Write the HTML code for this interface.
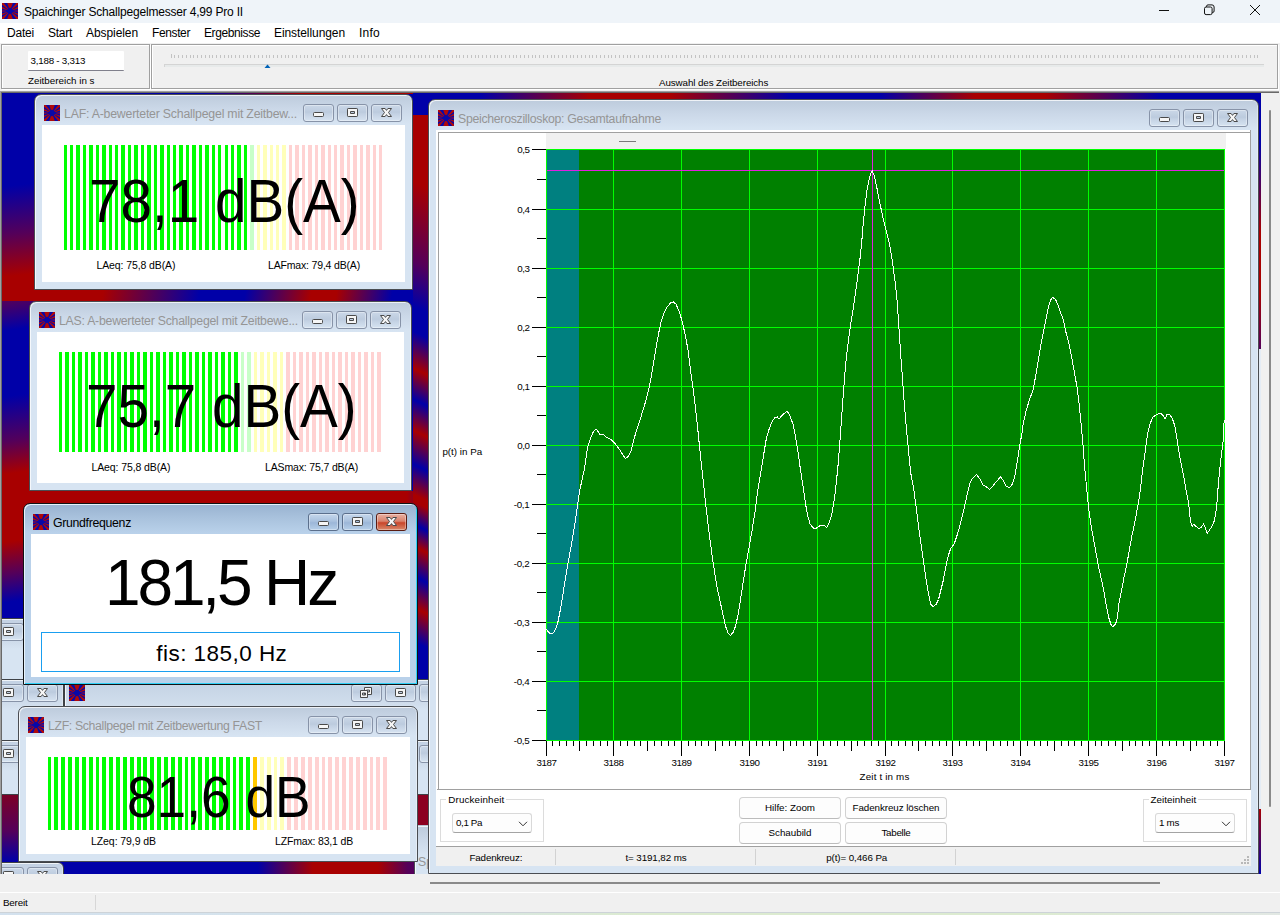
<!DOCTYPE html>
<html lang="de"><head><meta charset="utf-8"><title>Spaichinger Schallpegelmesser 4,99 Pro II</title>
<style>
html,body{margin:0;padding:0;background:#f0f0f0;}
body{width:1280px;height:915px;position:relative;overflow:hidden;font-family:"Liberation Sans",sans-serif;}
.t{position:absolute;white-space:pre;display:block;}
.r{position:absolute;}
.ic{position:absolute;display:block;}
#mdi{position:absolute;left:2px;top:93px;width:1259px;height:781px;overflow:hidden;background:#0000a8;}
.win{position:absolute;box-sizing:border-box;border:1px solid #4a4d52;border-radius:7px 7px 0 0;background:linear-gradient(#bdcbdc 0,#cbd8e8 14px,#d7e4f2 29px,#d7e4f2 100%);box-shadow:inset 1px 1px 0 rgba(255,255,255,.75),inset -1px 0 0 rgba(255,255,255,.35);}
.win.act{border-color:#101214;box-shadow:inset 1px 1px 0 #e6f3fc,inset -1px -1px 0 #2fd0f6;background:linear-gradient(#98b2d0 0,#a9c2dd 14px,#b9d1ea 29px,#b9d1ea 100%);}
.win.mini{border-radius:6px 6px 0 0;border-color:#3e4146;background:linear-gradient(#c3d1e3 0,#d0ddec 24px,#d7e4f2 30px,#d7e4f2 100%);}
.cli{position:absolute;background:#fff;overflow:hidden;}
.wb{position:absolute;width:31px;height:18px;box-sizing:border-box;border:1px solid #8793a8;border-radius:3px;background:linear-gradient(#cbd8e8 0,#bccbde 45%,#c3d1e3 55%,#d6e3f1 100%);box-shadow:inset 0 0 0 1px rgba(255,255,255,.35);}
.cb{position:absolute;box-sizing:border-box;border:1px solid #d9d9d9;border-bottom-color:#a4a4a4;border-radius:3px;background:#fdfdfd;}
.pb{position:absolute;box-sizing:border-box;border:1px solid #d2d2d2;border-bottom-color:#bcbcbc;border-radius:4px;background:#fdfdfd;}
.wb svg{position:absolute;left:-1px;top:-1px}
.win.act .wb{border-color:#5b6f8c;background:linear-gradient(#c5d7ec 0,#a9c1de 45%,#9cb7d8 55%,#b6cfe9 100%);}
.win.act .wb.cl{border-color:#5a1c12;background:linear-gradient(#e9b1a3 0,#d9826c 45%,#c8452a 55%,#d9896a 100%);}
</style></head><body>
<div class="r" style="left:0px;top:0px;width:1280px;height:23px;background:#eff4f9;"></div>
<svg class="ic" viewBox="0 0 16 16" width="16" height="16" style="left:2px;top:3px"><rect width="16" height="16" fill="#0808a8"/><path fill="#b00a0a" d="M8.0 8.0L1.5 -10.9L14.5 -10.9zM8.0 8.0L14.5 26.9L1.5 26.9zM8.0 8.0L20.3 -7.8L23.8 -4.3zM8.0 8.0L-7.8 -4.3L-4.3 -7.8zM8.0 8.0L-4.3 23.8L-7.8 20.3zM8.0 8.0L23.8 20.3L20.3 23.8zM8.0 8.0L25.7 -1.2L27.2 2.3zM8.0 8.0L-11.2 2.3L-9.7 -1.2zM8.0 8.0L-9.7 17.2L-11.2 13.7zM8.0 8.0L27.2 13.7L25.7 17.2z"/><path fill="#8a0a3c" d="M8.0 8.0L27.9 5.9L27.9 10.1zM8.0 8.0L-11.9 10.1L-11.9 5.9z"/><path d="M8 4.6L12.6 8 8 11.4 3.4 8z" fill="#0808a8"/></svg>
<span class="t" style="left:24.00px;top:5.64px;font-size:12px;line-height:13.40px;color:#000;letter-spacing:-0.190px;">Spaichinger Schallpegelmesser 4,99 Pro II</span>
<svg class="ic" style="left:1150px;top:0" width="130" height="23" viewBox="0 0 130 23" fill="none" stroke="#111" stroke-width="1"><path d="M9 10.5h10"/><rect x="54.5" y="7" width="7.6" height="7.6" rx="1.6"/><path d="M56.5 7v-.6a1.5 1.5 0 0 1 1.5-1.5h4a2.1 2.1 0 0 1 2.1 2.1v4a1.5 1.5 0 0 1-1.5 1.5h-.5"/><path d="M100 5l10 10M110 5l-10 10"/></svg>
<div class="r" style="left:0px;top:23px;width:1280px;height:20px;background:#ffffff;"></div>
<span class="t" style="left:7.00px;top:27.14px;font-size:12px;line-height:13.40px;color:#000;letter-spacing:-0.203px;">Datei</span>
<span class="t" style="left:48.00px;top:27.14px;font-size:12px;line-height:13.40px;color:#000;letter-spacing:-0.268px;">Start</span>
<span class="t" style="left:86.00px;top:27.14px;font-size:12px;line-height:13.40px;color:#000;letter-spacing:-0.078px;">Abspielen</span>
<span class="t" style="left:152.00px;top:27.14px;font-size:12px;line-height:13.40px;color:#000;letter-spacing:-0.383px;">Fenster</span>
<span class="t" style="left:204.00px;top:27.14px;font-size:12px;line-height:13.40px;color:#000;letter-spacing:-0.404px;">Ergebnisse</span>
<span class="t" style="left:274.00px;top:27.14px;font-size:12px;line-height:13.40px;color:#000;letter-spacing:-0.081px;">Einstellungen</span>
<span class="t" style="left:359.00px;top:27.14px;font-size:12px;line-height:13.40px;color:#000;letter-spacing:0.246px;">Info</span>
<div class="r" style="left:0px;top:43px;width:1280px;height:48px;background:#f0f0f0;"></div>
<div class="r" style="left:2px;top:45px;width:149px;height:45px;background:transparent;border:1px solid #fff;box-sizing:border-box"></div>
<div class="r" style="left:1px;top:44px;width:149px;height:45px;background:transparent;border:1px solid #a0a0a0;box-sizing:border-box"></div>
<div class="r" style="left:152px;top:45px;width:1127px;height:45px;background:transparent;border:1px solid #fff;box-sizing:border-box"></div>
<div class="r" style="left:151px;top:44px;width:1127px;height:45px;background:transparent;border:1px solid #a0a0a0;box-sizing:border-box"></div>
<div class="r" style="left:28px;top:51px;width:96px;height:20px;background:#fff;border-bottom:1px solid #80808c;box-sizing:border-box;border-radius:1px"></div>
<span class="t" style="left:30.60px;top:55.63px;font-size:9.8px;line-height:10.95px;color:#000;letter-spacing:-0.243px;">3,188 - 3,313</span>
<span class="t" style="left:28.00px;top:75.53px;font-size:9.8px;line-height:10.95px;color:#000;letter-spacing:0.003px;">Zeitbereich in s</span>
<span class="t" style="left:659.00px;top:77.63px;font-size:9.8px;line-height:10.95px;color:#000;letter-spacing:-0.099px;">Auswahl des Zeitbereichs</span>
<svg class="ic" style="left:0;top:50px" width="1280" height="20" viewBox="0 50 1280 20" shape-rendering="crispEdges"><path d="M171.5 54V58M174.5 55V58M178.5 55V58M182.5 55V58M186.5 55V58M190.5 55V58M193.5 55V58M197.5 55V58M201.5 55V58M205.5 55V58M209.5 55V58M212.5 55V58M216.5 55V58M220.5 55V58M224.5 55V58M228.5 55V58M231.5 55V58M235.5 55V58M239.5 55V58M243.5 55V58M247.5 55V58M250.5 55V58M254.5 55V58M258.5 55V58M262.5 55V58M266.5 55V58M269.5 55V58M273.5 55V58M277.5 55V58M281.5 55V58M285.5 55V58M288.5 55V58M292.5 55V58M296.5 55V58M300.5 55V58M304.5 55V58M307.5 55V58M311.5 55V58M315.5 55V58M319.5 55V58M323.5 55V58M326.5 55V58M330.5 55V58M334.5 55V58M338.5 55V58M342.5 55V58M345.5 55V58M349.5 55V58M353.5 55V58M357.5 55V58M361.5 55V58M364.5 55V58M368.5 55V58M372.5 55V58M376.5 55V58M380.5 55V58M383.5 55V58M387.5 55V58M391.5 55V58M395.5 55V58M399.5 55V58M402.5 55V58M406.5 55V58M410.5 55V58M414.5 55V58M418.5 55V58M421.5 55V58M425.5 55V58M429.5 55V58M433.5 55V58M437.5 55V58M440.5 55V58M444.5 55V58M448.5 55V58M452.5 55V58M456.5 55V58M459.5 55V58M463.5 55V58M467.5 55V58M471.5 55V58M475.5 55V58M478.5 55V58M482.5 55V58M486.5 55V58M490.5 55V58M494.5 55V58M497.5 55V58M501.5 55V58M505.5 55V58M509.5 55V58M513.5 55V58M516.5 55V58M520.5 55V58M524.5 55V58M528.5 55V58M532.5 55V58M535.5 55V58M539.5 55V58M543.5 55V58M547.5 55V58M551.5 55V58M554.5 55V58M558.5 55V58M562.5 55V58M566.5 55V58M570.5 55V58M573.5 55V58M577.5 55V58M581.5 55V58M585.5 55V58M589.5 55V58M592.5 55V58M596.5 55V58M600.5 55V58M604.5 55V58M608.5 55V58M611.5 55V58M615.5 55V58M619.5 55V58M623.5 55V58M627.5 55V58M630.5 55V58M634.5 55V58M638.5 55V58M642.5 55V58M646.5 55V58M649.5 55V58M653.5 55V58M657.5 55V58M661.5 55V58M665.5 55V58M668.5 55V58M672.5 55V58M676.5 55V58M680.5 55V58M684.5 55V58M687.5 55V58M691.5 55V58M695.5 55V58M699.5 55V58M703.5 55V58M706.5 55V58M710.5 55V58M714.5 55V58M718.5 55V58M722.5 55V58M725.5 55V58M729.5 55V58M733.5 55V58M737.5 55V58M741.5 55V58M744.5 55V58M748.5 55V58M752.5 55V58M756.5 55V58M760.5 55V58M763.5 55V58M767.5 55V58M771.5 55V58M775.5 55V58M779.5 55V58M782.5 55V58M786.5 55V58M790.5 55V58M794.5 55V58M798.5 55V58M801.5 55V58M805.5 55V58M809.5 55V58M813.5 55V58M817.5 55V58M820.5 55V58M824.5 55V58M828.5 55V58M832.5 55V58M836.5 55V58M839.5 55V58M843.5 55V58M847.5 55V58M851.5 55V58M855.5 55V58M858.5 55V58M862.5 55V58M866.5 55V58M870.5 55V58M874.5 55V58M877.5 55V58M881.5 55V58M885.5 55V58M889.5 55V58M893.5 55V58M896.5 55V58M900.5 55V58M904.5 55V58M908.5 55V58M912.5 55V58M915.5 55V58M919.5 55V58M923.5 55V58M927.5 55V58M931.5 55V58M934.5 55V58M938.5 55V58M942.5 55V58M946.5 55V58M950.5 55V58M953.5 55V58M957.5 55V58M961.5 55V58M965.5 55V58M969.5 55V58M972.5 55V58M976.5 55V58M980.5 55V58M984.5 55V58M988.5 55V58M991.5 55V58M995.5 55V58M999.5 55V58M1003.5 55V58M1007.5 55V58M1010.5 55V58M1014.5 55V58M1018.5 55V58M1022.5 55V58M1026.5 55V58M1029.5 55V58M1033.5 55V58M1037.5 55V58M1041.5 55V58M1045.5 55V58M1048.5 55V58M1052.5 55V58M1056.5 55V58M1060.5 55V58M1064.5 55V58M1067.5 55V58M1071.5 55V58M1075.5 55V58M1079.5 55V58M1083.5 55V58M1086.5 55V58M1090.5 55V58M1094.5 55V58M1098.5 55V58M1102.5 55V58M1105.5 55V58M1109.5 55V58M1113.5 55V58M1117.5 55V58M1121.5 55V58M1124.5 55V58M1128.5 55V58M1132.5 55V58M1136.5 55V58M1140.5 55V58M1143.5 55V58M1147.5 55V58M1151.5 55V58M1155.5 55V58M1159.5 55V58M1162.5 55V58M1166.5 55V58M1170.5 55V58M1174.5 55V58M1178.5 55V58M1181.5 55V58M1185.5 55V58M1189.5 55V58M1193.5 55V58M1197.5 55V58M1200.5 55V58M1204.5 55V58M1208.5 55V58M1212.5 55V58M1216.5 55V58M1219.5 55V58M1223.5 55V58M1227.5 55V58M1231.5 55V58M1235.5 55V58M1238.5 55V58M1242.5 55V58M1246.5 55V58M1250.5 55V58M1254.5 55V58M1257.5 55V58" stroke="#c3c3c3" stroke-width="1" fill="none"/><rect x="164" y="64" width="1100" height="3" fill="#e7eaea"/><path d="M164 64.5H1264M164.5 64V67" stroke="#d4d4d4" stroke-width="1" fill="none"/></svg>
<svg class="ic" style="left:264px;top:64px" width="7" height="4" viewBox="0 0 7 4"><path d="M.5 4L3.5 .6L6.5 4z" fill="#0063b8"/></svg>
<div id="mdi">
<div class="r" style="left:0px;top:0px;width:1259px;height:781px;background:#0000a8"></div>
<div class="r" style="left:411px;top:0px;width:848px;height:15px;background:linear-gradient(90deg,#0000a8 0px,#0000a8 67px,#a80000 177px,#a80000 257px,#0000a8 377px,#0000a8 467px,#a80000 562px,#a80000 632px,#0000a8 747px,#0000a8 848px)"></div>
<div class="r" style="left:0px;top:0px;width:411px;height:1px;background:linear-gradient(90deg,#0000a8 0px,#0000a8 200px,#a80000 300px,#a80000 411px)"></div>
<div class="r" style="left:0px;top:1px;width:41px;height:207px;background:linear-gradient(174deg,#0000a8 0px,#0000a8 92px,#54005a 140px,#a80000 182px,#a80000 207px)"></div>
<div class="r" style="left:0px;top:197px;width:426px;height:19px;background:linear-gradient(100deg,#a80000 0px,#a80000 100px,#0000a8 195px,#0000a8 240px,#a80000 305px,#a80000 330px,#0000a8 385px,#0000a8 426px)"></div>
<div class="r" style="left:0px;top:208px;width:36px;height:203px;background:linear-gradient(172deg,#54005a 0px,#0000a8 30px,#0000a8 95px,#54005a 140px,#a80000 172px,#a80000 203px)"></div>
<div class="r" style="left:0px;top:398px;width:426px;height:20px;background:linear-gradient(90deg,#a80000 0px,#a80000 405px,#54005a 426px)"></div>
<div class="r" style="left:0px;top:411px;width:30px;height:114px;background:linear-gradient(172deg,#a80000 0px,#a80000 38px,#54005a 70px,#0000a8 98px,#0000a8 114px)"></div>
<div class="r" style="left:411px;top:22px;width:16px;height:565px;background:linear-gradient(205deg,#a80000 3.3px,#a80000 66.7px,#54005a 139.2px,#0000a8 180.0px,#0000a8 202.7px,#a80000 236.2px,#0000a8 264.3px,#a80000 292.4px,#0000a8 323.2px,#a80000 350.4px,#a80000 356.8px,#0000a8 377.6px,#a80000 397.5px,#0000a8 424.7px,#a80000 452.8px,#0000a8 483.6px,#0000a8 515.4px)"></div>
<div class="r" style="left:411px;top:7px;width:16px;height:15px;background:#0000a8"></div>
<div class="r" style="left:0px;top:698px;width:17px;height:71px;background:linear-gradient(180deg,#800020 0px,#54005a 40px,#0000a8 71px)"></div>
<div class="r" style="left:61px;top:768px;width:366px;height:13px;background:linear-gradient(90deg,#0000a8 0px,#0000a8 195px,#a80000 250px,#a80000 315px,#54005a 345px,#54005a 366px)"></div>
<div class="r" style="left:416px;top:702px;width:11px;height:30px;background:#8c0020"></div>
<div class="r" style="left:1257px;top:0px;width:2px;height:256px;background:linear-gradient(180deg,#0000a8 0px,#0000a8 50px,#a80000 140px,#a80000 200px,#54005a 256px)"></div>
<div class="r" style="left:1257px;top:256px;width:2px;height:460px;background:#e4ecf5"></div>
<div class="r" style="left:1257px;top:716px;width:2px;height:65px;background:linear-gradient(180deg,#a80000 0px,#54005a 30px,#0000a8 65px)"></div>
<div class="win mini" style="left:-333px;top:525px;width:395px;height:62px"><div class="wb " style="left:289px;top:4px"><svg width="31" height="18" viewBox="0 0 31 18" fill="#f6f6f6" stroke="#4a4a4a" stroke-width="1" stroke-linejoin="round"><rect x="10.5" y="8.5" width="10" height="4" rx="1" /></svg></div><div class="wb " style="left:323px;top:4px"><svg width="31" height="18" viewBox="0 0 31 18" fill="#f6f6f6" stroke="#4a4a4a" stroke-width="1" stroke-linejoin="round"><path fill-rule="evenodd" d="M11.2 4.5h8.6a.7.7 0 0 1 .7.7v6.6a.7.7 0 0 1-.7.7h-8.6a.7.7 0 0 1-.7-.7v-6.6a.7.7 0 0 1 .7-.7zM13.5 7.5v2h4v-2z"/></svg></div><div class="wb " style="left:357px;top:4px"><svg width="31" height="18" viewBox="0 0 31 18" fill="#f6f6f6" stroke="#4a4a4a" stroke-width="1" stroke-linejoin="round"><path d="M10.5 4.5h3.6l1.4 1.9 1.4-1.9h3.6l-3 4 3 4h-3.6l-1.4-1.9-1.4 1.9h-3.6l3-4z"/></svg></div></div>
<div class="win mini" style="left:-333px;top:586px;width:395px;height:62px"><div class="wb " style="left:289px;top:4px"><svg width="31" height="18" viewBox="0 0 31 18" fill="#f6f6f6" stroke="#4a4a4a" stroke-width="1" stroke-linejoin="round"><rect x="10.5" y="8.5" width="10" height="4" rx="1" /></svg></div><div class="wb " style="left:323px;top:4px"><svg width="31" height="18" viewBox="0 0 31 18" fill="#f6f6f6" stroke="#4a4a4a" stroke-width="1" stroke-linejoin="round"><path fill-rule="evenodd" d="M11.2 4.5h8.6a.7.7 0 0 1 .7.7v6.6a.7.7 0 0 1-.7.7h-8.6a.7.7 0 0 1-.7-.7v-6.6a.7.7 0 0 1 .7-.7zM13.5 7.5v2h4v-2z"/></svg></div><div class="wb " style="left:357px;top:4px"><svg width="31" height="18" viewBox="0 0 31 18" fill="#f6f6f6" stroke="#4a4a4a" stroke-width="1" stroke-linejoin="round"><path d="M10.5 4.5h3.6l1.4 1.9 1.4-1.9h3.6l-3 4 3 4h-3.6l-1.4-1.9-1.4 1.9h-3.6l3-4z"/></svg></div></div>
<div class="win mini" style="left:62px;top:586px;width:392px;height:62px"><svg class="ic" viewBox="0 0 16 16" width="16" height="16" style="left:4px;top:5px"><rect width="16" height="16" fill="#0808a8"/><path fill="#b00a0a" d="M8.0 8.0L1.5 -10.9L14.5 -10.9zM8.0 8.0L14.5 26.9L1.5 26.9zM8.0 8.0L20.3 -7.8L23.8 -4.3zM8.0 8.0L-7.8 -4.3L-4.3 -7.8zM8.0 8.0L-4.3 23.8L-7.8 20.3zM8.0 8.0L23.8 20.3L20.3 23.8zM8.0 8.0L25.7 -1.2L27.2 2.3zM8.0 8.0L-11.2 2.3L-9.7 -1.2zM8.0 8.0L-9.7 17.2L-11.2 13.7zM8.0 8.0L27.2 13.7L25.7 17.2z"/><path fill="#8a0a3c" d="M8.0 8.0L27.9 5.9L27.9 10.1zM8.0 8.0L-11.9 10.1L-11.9 5.9z"/><path d="M8 4.6L12.6 8 8 11.4 3.4 8z" fill="#0808a8"/></svg><div class="wb " style="left:286px;top:4px"><svg width="31" height="18" viewBox="0 0 31 18" fill="#f6f6f6" stroke="#4a4a4a" stroke-width="1" stroke-linejoin="round"><path fill-rule="evenodd" d="M13.5 3.5h7v7h-7zM15.5 6v2h3v-2z"/><path fill-rule="evenodd" d="M9.5 6.5h7v7h-7zM11.5 9v2h3v-2z"/></svg></div><div class="wb " style="left:320px;top:4px"><svg width="31" height="18" viewBox="0 0 31 18" fill="#f6f6f6" stroke="#4a4a4a" stroke-width="1" stroke-linejoin="round"><path fill-rule="evenodd" d="M11.2 4.5h8.6a.7.7 0 0 1 .7.7v6.6a.7.7 0 0 1-.7.7h-8.6a.7.7 0 0 1-.7-.7v-6.6a.7.7 0 0 1 .7-.7zM13.5 7.5v2h4v-2z"/></svg></div><div class="wb " style="left:354px;top:4px"><svg width="31" height="18" viewBox="0 0 31 18" fill="#f6f6f6" stroke="#4a4a4a" stroke-width="1" stroke-linejoin="round"><path d="M10.5 4.5h3.6l1.4 1.9 1.4-1.9h3.6l-3 4 3 4h-3.6l-1.4-1.9-1.4 1.9h-3.6l3-4z"/></svg></div></div>
<div class="win mini" style="left:-333px;top:647px;width:395px;height:55px"><div class="wb " style="left:289px;top:4px"><svg width="31" height="18" viewBox="0 0 31 18" fill="#f6f6f6" stroke="#4a4a4a" stroke-width="1" stroke-linejoin="round"><rect x="10.5" y="8.5" width="10" height="4" rx="1" /></svg></div><div class="wb " style="left:323px;top:4px"><svg width="31" height="18" viewBox="0 0 31 18" fill="#f6f6f6" stroke="#4a4a4a" stroke-width="1" stroke-linejoin="round"><path fill-rule="evenodd" d="M11.2 4.5h8.6a.7.7 0 0 1 .7.7v6.6a.7.7 0 0 1-.7.7h-8.6a.7.7 0 0 1-.7-.7v-6.6a.7.7 0 0 1 .7-.7zM13.5 7.5v2h4v-2z"/></svg></div><div class="wb " style="left:357px;top:4px"><svg width="31" height="18" viewBox="0 0 31 18" fill="#f6f6f6" stroke="#4a4a4a" stroke-width="1" stroke-linejoin="round"><path d="M10.5 4.5h3.6l1.4 1.9 1.4-1.9h3.6l-3 4 3 4h-3.6l-1.4-1.9-1.4 1.9h-3.6l3-4z"/></svg></div></div>
<div class="win mini" style="left:62px;top:647px;width:392px;height:55px"><svg class="ic" viewBox="0 0 16 16" width="16" height="16" style="left:4px;top:5px"><rect width="16" height="16" fill="#0808a8"/><path fill="#b00a0a" d="M8.0 8.0L1.5 -10.9L14.5 -10.9zM8.0 8.0L14.5 26.9L1.5 26.9zM8.0 8.0L20.3 -7.8L23.8 -4.3zM8.0 8.0L-7.8 -4.3L-4.3 -7.8zM8.0 8.0L-4.3 23.8L-7.8 20.3zM8.0 8.0L23.8 20.3L20.3 23.8zM8.0 8.0L25.7 -1.2L27.2 2.3zM8.0 8.0L-11.2 2.3L-9.7 -1.2zM8.0 8.0L-9.7 17.2L-11.2 13.7zM8.0 8.0L27.2 13.7L25.7 17.2z"/><path fill="#8a0a3c" d="M8.0 8.0L27.9 5.9L27.9 10.1zM8.0 8.0L-11.9 10.1L-11.9 5.9z"/><path d="M8 4.6L12.6 8 8 11.4 3.4 8z" fill="#0808a8"/></svg><div class="wb " style="left:286px;top:4px"><svg width="31" height="18" viewBox="0 0 31 18" fill="#f6f6f6" stroke="#4a4a4a" stroke-width="1" stroke-linejoin="round"><path fill-rule="evenodd" d="M13.5 3.5h7v7h-7zM15.5 6v2h3v-2z"/><path fill-rule="evenodd" d="M9.5 6.5h7v7h-7zM11.5 9v2h3v-2z"/></svg></div><div class="wb " style="left:320px;top:4px"><svg width="31" height="18" viewBox="0 0 31 18" fill="#f6f6f6" stroke="#4a4a4a" stroke-width="1" stroke-linejoin="round"><path fill-rule="evenodd" d="M11.2 4.5h8.6a.7.7 0 0 1 .7.7v6.6a.7.7 0 0 1-.7.7h-8.6a.7.7 0 0 1-.7-.7v-6.6a.7.7 0 0 1 .7-.7zM13.5 7.5v2h4v-2z"/></svg></div><div class="wb " style="left:354px;top:4px"><svg width="31" height="18" viewBox="0 0 31 18" fill="#f6f6f6" stroke="#4a4a4a" stroke-width="1" stroke-linejoin="round"><path d="M10.5 4.5h3.6l1.4 1.9 1.4-1.9h3.6l-3 4 3 4h-3.6l-1.4-1.9-1.4 1.9h-3.6l3-4z"/></svg></div></div>
<div class="win mini" style="left:-333px;top:769px;width:395px;height:62px"><div class="wb " style="left:289px;top:4px"><svg width="31" height="18" viewBox="0 0 31 18" fill="#f6f6f6" stroke="#4a4a4a" stroke-width="1" stroke-linejoin="round"><rect x="10.5" y="8.5" width="10" height="4" rx="1" /></svg></div><div class="wb " style="left:323px;top:4px"><svg width="31" height="18" viewBox="0 0 31 18" fill="#f6f6f6" stroke="#4a4a4a" stroke-width="1" stroke-linejoin="round"><path fill-rule="evenodd" d="M11.2 4.5h8.6a.7.7 0 0 1 .7.7v6.6a.7.7 0 0 1-.7.7h-8.6a.7.7 0 0 1-.7-.7v-6.6a.7.7 0 0 1 .7-.7zM13.5 7.5v2h4v-2z"/></svg></div><div class="wb " style="left:357px;top:4px"><svg width="31" height="18" viewBox="0 0 31 18" fill="#f6f6f6" stroke="#4a4a4a" stroke-width="1" stroke-linejoin="round"><path d="M10.5 4.5h3.6l1.4 1.9 1.4-1.9h3.6l-3 4 3 4h-3.6l-1.4-1.9-1.4 1.9h-3.6l3-4z"/></svg></div></div>
<div class="win" style="left:412px;top:732px;width:120px;height:60px;border-radius:0;border-top-color:#b8c4d2"><span class="t" style="left:3.00px;top:30.37px;font-size:12.3px;line-height:13.74px;color:#959595;">Sp</span></div>
<div class="win" style="left:32px;top:1px;width:379px;height:196px"><svg class="ic" viewBox="0 0 16 16" width="16" height="16" style="left:9px;top:10px"><rect width="16" height="16" fill="#0808a8"/><path fill="#b00a0a" d="M8.0 8.0L1.5 -10.9L14.5 -10.9zM8.0 8.0L14.5 26.9L1.5 26.9zM8.0 8.0L20.3 -7.8L23.8 -4.3zM8.0 8.0L-7.8 -4.3L-4.3 -7.8zM8.0 8.0L-4.3 23.8L-7.8 20.3zM8.0 8.0L23.8 20.3L20.3 23.8zM8.0 8.0L25.7 -1.2L27.2 2.3zM8.0 8.0L-11.2 2.3L-9.7 -1.2zM8.0 8.0L-9.7 17.2L-11.2 13.7zM8.0 8.0L27.2 13.7L25.7 17.2z"/><path fill="#8a0a3c" d="M8.0 8.0L27.9 5.9L27.9 10.1zM8.0 8.0L-11.9 10.1L-11.9 5.9z"/><path d="M8 4.6L12.6 8 8 11.4 3.4 8z" fill="#0808a8"/></svg><span class="t" style="left:29.00px;top:12.87px;font-size:12.3px;line-height:13.74px;color:#959595;letter-spacing:-0.205px;">LAF: A-bewerteter Schallpegel mit Zeitbew...</span><div class="wb " style="left:268px;top:9px"><svg width="31" height="18" viewBox="0 0 31 18" fill="#f6f6f6" stroke="#4a4a4a" stroke-width="1" stroke-linejoin="round"><rect x="10.5" y="8.5" width="10" height="4" rx="1" /></svg></div><div class="wb " style="left:302px;top:9px"><svg width="31" height="18" viewBox="0 0 31 18" fill="#f6f6f6" stroke="#4a4a4a" stroke-width="1" stroke-linejoin="round"><path fill-rule="evenodd" d="M11.2 4.5h8.6a.7.7 0 0 1 .7.7v6.6a.7.7 0 0 1-.7.7h-8.6a.7.7 0 0 1-.7-.7v-6.6a.7.7 0 0 1 .7-.7zM13.5 7.5v2h4v-2z"/></svg></div><div class="wb " style="left:336px;top:9px"><svg width="31" height="18" viewBox="0 0 31 18" fill="#f6f6f6" stroke="#4a4a4a" stroke-width="1" stroke-linejoin="round"><path d="M10.5 4.5h3.6l1.4 1.9 1.4-1.9h3.6l-3 4 3 4h-3.6l-1.4-1.9-1.4 1.9h-3.6l3-4z"/></svg></div><div class="cli" style="left:7px;top:30px;width:363px;height:157px"><svg class="ic" style="left:0;top:0" width="363" height="157" viewBox="42 125 363 157" shape-rendering="crispEdges"><rect x="64" y="145" width="3" height="105" fill="#00ff00"/><rect x="70" y="145" width="3" height="105" fill="#00ff00"/><rect x="76" y="145" width="4" height="105" fill="#00ff00"/><rect x="83" y="145" width="3" height="105" fill="#00ff00"/><rect x="89" y="145" width="4" height="105" fill="#00ff00"/><rect x="96" y="145" width="3" height="105" fill="#00ff00"/><rect x="102" y="145" width="4" height="105" fill="#00ff00"/><rect x="109" y="145" width="3" height="105" fill="#00ff00"/><rect x="115" y="145" width="3" height="105" fill="#00ff00"/><rect x="121" y="145" width="4" height="105" fill="#00ff00"/><rect x="128" y="145" width="3" height="105" fill="#00ff00"/><rect x="134" y="145" width="4" height="105" fill="#00ff00"/><rect x="141" y="145" width="3" height="105" fill="#00ff00"/><rect x="147" y="145" width="4" height="105" fill="#00ff00"/><rect x="154" y="145" width="3" height="105" fill="#00ff00"/><rect x="160" y="145" width="4" height="105" fill="#00ff00"/><rect x="167" y="145" width="3" height="105" fill="#00ff00"/><rect x="173" y="145" width="3" height="105" fill="#00ff00"/><rect x="179" y="145" width="4" height="105" fill="#00ff00"/><rect x="186" y="145" width="3" height="105" fill="#00ff00"/><rect x="192" y="145" width="4" height="105" fill="#00ff00"/><rect x="199" y="145" width="3" height="105" fill="#00ff00"/><rect x="205" y="145" width="4" height="105" fill="#00ff00"/><rect x="212" y="145" width="3" height="105" fill="#00ff00"/><rect x="218" y="145" width="3" height="105" fill="#00ff00"/><rect x="225" y="145" width="3" height="105" fill="#00ff00"/><rect x="231" y="145" width="3" height="105" fill="#00ff00"/><rect x="237" y="145" width="4" height="105" fill="#00ff00"/><rect x="244" y="145" width="3" height="105" fill="#00ff00"/><rect x="250" y="145" width="4" height="105" fill="#c8ffc8"/><rect x="257" y="145" width="3" height="105" fill="#ffffb9"/><rect x="263" y="145" width="4" height="105" fill="#ffffb9"/><rect x="270" y="145" width="3" height="105" fill="#ffffb9"/><rect x="276" y="145" width="3" height="105" fill="#ffffb9"/><rect x="282" y="145" width="4" height="105" fill="#ffffb9"/><rect x="289" y="145" width="3" height="105" fill="#ffd2d2"/><rect x="295" y="145" width="4" height="105" fill="#ffd2d2"/><rect x="302" y="145" width="3" height="105" fill="#ffd2d2"/><rect x="308" y="145" width="4" height="105" fill="#ffd2d2"/><rect x="315" y="145" width="3" height="105" fill="#ffd2d2"/><rect x="321" y="145" width="4" height="105" fill="#ffd2d2"/><rect x="328" y="145" width="3" height="105" fill="#ffd2d2"/><rect x="334" y="145" width="3" height="105" fill="#ffd2d2"/><rect x="340" y="145" width="4" height="105" fill="#ffd2d2"/><rect x="347" y="145" width="3" height="105" fill="#ffd2d2"/><rect x="353" y="145" width="4" height="105" fill="#ffd2d2"/><rect x="360" y="145" width="3" height="105" fill="#ffd2d2"/><rect x="366" y="145" width="4" height="105" fill="#ffd2d2"/><rect x="373" y="145" width="3" height="105" fill="#ffd2d2"/><rect x="379" y="145" width="3" height="105" fill="#ffd2d2"/></svg><span class="t" style="left:46.90px;top:42.10px;font-size:61px;line-height:68.14px;color:#000;transform:scaleX(0.928);transform-origin:0 0;">78,1 dB(A)</span><span class="t" style="left:54.40px;top:135.10px;font-size:10.5px;line-height:11.73px;color:#000;letter-spacing:-0.097px;">LAeq: 75,8 dB(A)</span><span class="t" style="left:226.00px;top:135.10px;font-size:10.5px;line-height:11.73px;color:#000;letter-spacing:-0.173px;">LAFmax: 79,4 dB(A)</span></div></div>
<div class="win" style="left:27px;top:208px;width:383px;height:190px"><svg class="ic" viewBox="0 0 16 16" width="16" height="16" style="left:9px;top:10px"><rect width="16" height="16" fill="#0808a8"/><path fill="#b00a0a" d="M8.0 8.0L1.5 -10.9L14.5 -10.9zM8.0 8.0L14.5 26.9L1.5 26.9zM8.0 8.0L20.3 -7.8L23.8 -4.3zM8.0 8.0L-7.8 -4.3L-4.3 -7.8zM8.0 8.0L-4.3 23.8L-7.8 20.3zM8.0 8.0L23.8 20.3L20.3 23.8zM8.0 8.0L25.7 -1.2L27.2 2.3zM8.0 8.0L-11.2 2.3L-9.7 -1.2zM8.0 8.0L-9.7 17.2L-11.2 13.7zM8.0 8.0L27.2 13.7L25.7 17.2z"/><path fill="#8a0a3c" d="M8.0 8.0L27.9 5.9L27.9 10.1zM8.0 8.0L-11.9 10.1L-11.9 5.9z"/><path d="M8 4.6L12.6 8 8 11.4 3.4 8z" fill="#0808a8"/></svg><span class="t" style="left:29.00px;top:12.87px;font-size:12.3px;line-height:13.74px;color:#959595;letter-spacing:-0.249px;">LAS: A-bewerteter Schallpegel mit Zeitbewe...</span><div class="wb " style="left:272px;top:9px"><svg width="31" height="18" viewBox="0 0 31 18" fill="#f6f6f6" stroke="#4a4a4a" stroke-width="1" stroke-linejoin="round"><rect x="10.5" y="8.5" width="10" height="4" rx="1" /></svg></div><div class="wb " style="left:306px;top:9px"><svg width="31" height="18" viewBox="0 0 31 18" fill="#f6f6f6" stroke="#4a4a4a" stroke-width="1" stroke-linejoin="round"><path fill-rule="evenodd" d="M11.2 4.5h8.6a.7.7 0 0 1 .7.7v6.6a.7.7 0 0 1-.7.7h-8.6a.7.7 0 0 1-.7-.7v-6.6a.7.7 0 0 1 .7-.7zM13.5 7.5v2h4v-2z"/></svg></div><div class="wb " style="left:340px;top:9px"><svg width="31" height="18" viewBox="0 0 31 18" fill="#f6f6f6" stroke="#4a4a4a" stroke-width="1" stroke-linejoin="round"><path d="M10.5 4.5h3.6l1.4 1.9 1.4-1.9h3.6l-3 4 3 4h-3.6l-1.4-1.9-1.4 1.9h-3.6l3-4z"/></svg></div><div class="cli" style="left:7px;top:30px;width:367px;height:151px"><svg class="ic" style="left:0;top:0" width="367" height="151" viewBox="37 332 367 151" shape-rendering="crispEdges"><rect x="59" y="352" width="3" height="100" fill="#00ff00"/><rect x="65" y="352" width="4" height="100" fill="#00ff00"/><rect x="72" y="352" width="3" height="100" fill="#00ff00"/><rect x="78" y="352" width="4" height="100" fill="#00ff00"/><rect x="85" y="352" width="3" height="100" fill="#00ff00"/><rect x="91" y="352" width="4" height="100" fill="#00ff00"/><rect x="98" y="352" width="3" height="100" fill="#00ff00"/><rect x="104" y="352" width="4" height="100" fill="#00ff00"/><rect x="111" y="352" width="3" height="100" fill="#00ff00"/><rect x="117" y="352" width="4" height="100" fill="#00ff00"/><rect x="124" y="352" width="3" height="100" fill="#00ff00"/><rect x="130" y="352" width="4" height="100" fill="#00ff00"/><rect x="137" y="352" width="3" height="100" fill="#00ff00"/><rect x="143" y="352" width="4" height="100" fill="#00ff00"/><rect x="150" y="352" width="3" height="100" fill="#00ff00"/><rect x="156" y="352" width="4" height="100" fill="#00ff00"/><rect x="163" y="352" width="3" height="100" fill="#00ff00"/><rect x="169" y="352" width="4" height="100" fill="#00ff00"/><rect x="176" y="352" width="3" height="100" fill="#00ff00"/><rect x="182" y="352" width="4" height="100" fill="#00ff00"/><rect x="189" y="352" width="3" height="100" fill="#00ff00"/><rect x="195" y="352" width="4" height="100" fill="#00ff00"/><rect x="202" y="352" width="3" height="100" fill="#00ff00"/><rect x="208" y="352" width="4" height="100" fill="#00ff00"/><rect x="215" y="352" width="3" height="100" fill="#00ff00"/><rect x="221" y="352" width="4" height="100" fill="#00ff00"/><rect x="228" y="352" width="3" height="100" fill="#00ff00"/><rect x="234" y="352" width="4" height="100" fill="#00ff00"/><rect x="241" y="352" width="3" height="100" fill="#c8ffc8"/><rect x="247" y="352" width="4" height="100" fill="#c8ffc8"/><rect x="254" y="352" width="3" height="100" fill="#ffffb9"/><rect x="260" y="352" width="4" height="100" fill="#ffffb9"/><rect x="267" y="352" width="3" height="100" fill="#ffffb9"/><rect x="273" y="352" width="4" height="100" fill="#ffffb9"/><rect x="280" y="352" width="3" height="100" fill="#ffffb9"/><rect x="286" y="352" width="4" height="100" fill="#ffd2d2"/><rect x="293" y="352" width="3" height="100" fill="#ffd2d2"/><rect x="299" y="352" width="4" height="100" fill="#ffd2d2"/><rect x="306" y="352" width="3" height="100" fill="#ffd2d2"/><rect x="312" y="352" width="4" height="100" fill="#ffd2d2"/><rect x="319" y="352" width="3" height="100" fill="#ffd2d2"/><rect x="325" y="352" width="4" height="100" fill="#ffd2d2"/><rect x="332" y="352" width="3" height="100" fill="#ffd2d2"/><rect x="338" y="352" width="4" height="100" fill="#ffd2d2"/><rect x="345" y="352" width="3" height="100" fill="#ffd2d2"/><rect x="351" y="352" width="4" height="100" fill="#ffd2d2"/><rect x="358" y="352" width="3" height="100" fill="#ffd2d2"/><rect x="364" y="352" width="4" height="100" fill="#ffd2d2"/><rect x="371" y="352" width="3" height="100" fill="#ffd2d2"/><rect x="377" y="352" width="4" height="100" fill="#ffd2d2"/></svg><span class="t" style="left:48.50px;top:39.80px;font-size:61px;line-height:68.14px;color:#000;transform:scaleX(0.928);transform-origin:0 0;">75,7 dB(A)</span><span class="t" style="left:54.40px;top:130.10px;font-size:10.5px;line-height:11.73px;color:#000;letter-spacing:-0.097px;">LAeq: 75,8 dB(A)</span><span class="t" style="left:228.00px;top:130.10px;font-size:10.5px;line-height:11.73px;color:#000;letter-spacing:-0.150px;">LASmax: 75,7 dB(A)</span></div></div>
<div class="win" style="left:16px;top:613px;width:400px;height:156px"><svg class="ic" viewBox="0 0 16 16" width="16" height="16" style="left:9px;top:10px"><rect width="16" height="16" fill="#0808a8"/><path fill="#b00a0a" d="M8.0 8.0L1.5 -10.9L14.5 -10.9zM8.0 8.0L14.5 26.9L1.5 26.9zM8.0 8.0L20.3 -7.8L23.8 -4.3zM8.0 8.0L-7.8 -4.3L-4.3 -7.8zM8.0 8.0L-4.3 23.8L-7.8 20.3zM8.0 8.0L23.8 20.3L20.3 23.8zM8.0 8.0L25.7 -1.2L27.2 2.3zM8.0 8.0L-11.2 2.3L-9.7 -1.2zM8.0 8.0L-9.7 17.2L-11.2 13.7zM8.0 8.0L27.2 13.7L25.7 17.2z"/><path fill="#8a0a3c" d="M8.0 8.0L27.9 5.9L27.9 10.1zM8.0 8.0L-11.9 10.1L-11.9 5.9z"/><path d="M8 4.6L12.6 8 8 11.4 3.4 8z" fill="#0808a8"/></svg><span class="t" style="left:29.00px;top:12.87px;font-size:12.3px;line-height:13.74px;color:#959595;letter-spacing:-0.350px;">LZF: Schallpegel mit Zeitbewertung FAST</span><div class="wb " style="left:289px;top:9px"><svg width="31" height="18" viewBox="0 0 31 18" fill="#f6f6f6" stroke="#4a4a4a" stroke-width="1" stroke-linejoin="round"><rect x="10.5" y="8.5" width="10" height="4" rx="1" /></svg></div><div class="wb " style="left:323px;top:9px"><svg width="31" height="18" viewBox="0 0 31 18" fill="#f6f6f6" stroke="#4a4a4a" stroke-width="1" stroke-linejoin="round"><path fill-rule="evenodd" d="M11.2 4.5h8.6a.7.7 0 0 1 .7.7v6.6a.7.7 0 0 1-.7.7h-8.6a.7.7 0 0 1-.7-.7v-6.6a.7.7 0 0 1 .7-.7zM13.5 7.5v2h4v-2z"/></svg></div><div class="wb " style="left:357px;top:9px"><svg width="31" height="18" viewBox="0 0 31 18" fill="#f6f6f6" stroke="#4a4a4a" stroke-width="1" stroke-linejoin="round"><path d="M10.5 4.5h3.6l1.4 1.9 1.4-1.9h3.6l-3 4 3 4h-3.6l-1.4-1.9-1.4 1.9h-3.6l3-4z"/></svg></div><div class="cli" style="left:7px;top:30px;width:384px;height:117px"><svg class="ic" style="left:0;top:0" width="384" height="117" viewBox="26 737 384 117" shape-rendering="crispEdges"><rect x="48" y="757" width="3" height="73" fill="#00ff00"/><rect x="54" y="757" width="4" height="73" fill="#00ff00"/><rect x="61" y="757" width="4" height="73" fill="#00ff00"/><rect x="68" y="757" width="4" height="73" fill="#00ff00"/><rect x="75" y="757" width="4" height="73" fill="#00ff00"/><rect x="82" y="757" width="4" height="73" fill="#00ff00"/><rect x="89" y="757" width="4" height="73" fill="#00ff00"/><rect x="96" y="757" width="3" height="73" fill="#00ff00"/><rect x="102" y="757" width="4" height="73" fill="#00ff00"/><rect x="109" y="757" width="4" height="73" fill="#00ff00"/><rect x="116" y="757" width="4" height="73" fill="#00ff00"/><rect x="123" y="757" width="4" height="73" fill="#00ff00"/><rect x="130" y="757" width="4" height="73" fill="#00ff00"/><rect x="137" y="757" width="4" height="73" fill="#00ff00"/><rect x="143" y="757" width="4" height="73" fill="#00ff00"/><rect x="150" y="757" width="4" height="73" fill="#00ff00"/><rect x="157" y="757" width="4" height="73" fill="#00ff00"/><rect x="164" y="757" width="4" height="73" fill="#00ff00"/><rect x="171" y="757" width="4" height="73" fill="#00ff00"/><rect x="178" y="757" width="4" height="73" fill="#00ff00"/><rect x="185" y="757" width="3" height="73" fill="#00ff00"/><rect x="191" y="757" width="4" height="73" fill="#00ff00"/><rect x="198" y="757" width="4" height="73" fill="#00ff00"/><rect x="205" y="757" width="4" height="73" fill="#00ff00"/><rect x="212" y="757" width="4" height="73" fill="#00ff00"/><rect x="219" y="757" width="4" height="73" fill="#00ff00"/><rect x="226" y="757" width="4" height="73" fill="#00ff00"/><rect x="233" y="757" width="3" height="73" fill="#00ff00"/><rect x="239" y="757" width="4" height="73" fill="#00ff00"/><rect x="246" y="757" width="4" height="73" fill="#00ff00"/><rect x="253" y="757" width="4" height="73" fill="#ffc800"/><rect x="260" y="757" width="4" height="73" fill="#ffffb9"/><rect x="267" y="757" width="4" height="73" fill="#ffffb9"/><rect x="274" y="757" width="3" height="73" fill="#ffffb9"/><rect x="280" y="757" width="4" height="73" fill="#ffffb9"/><rect x="287" y="757" width="4" height="73" fill="#ffd2d2"/><rect x="294" y="757" width="4" height="73" fill="#ffd2d2"/><rect x="301" y="757" width="4" height="73" fill="#ffd2d2"/><rect x="308" y="757" width="4" height="73" fill="#ffd2d2"/><rect x="315" y="757" width="4" height="73" fill="#ffd2d2"/><rect x="322" y="757" width="3" height="73" fill="#ffd2d2"/><rect x="328" y="757" width="4" height="73" fill="#ffd2d2"/><rect x="335" y="757" width="4" height="73" fill="#ffd2d2"/><rect x="342" y="757" width="4" height="73" fill="#ffd2d2"/><rect x="349" y="757" width="4" height="73" fill="#ffd2d2"/><rect x="356" y="757" width="4" height="73" fill="#ffd2d2"/><rect x="363" y="757" width="4" height="73" fill="#ffd2d2"/><rect x="370" y="757" width="3" height="73" fill="#ffd2d2"/><rect x="376" y="757" width="4" height="73" fill="#ffd2d2"/><rect x="383" y="757" width="4" height="73" fill="#ffd2d2"/></svg><span class="t" style="left:101.20px;top:27.65px;font-size:57.4px;line-height:64.12px;color:#000;transform:scaleX(0.928);transform-origin:0 0;">81,6 dB</span><span class="t" style="left:65.00px;top:98.90px;font-size:10.5px;line-height:11.73px;color:#000;letter-spacing:-0.074px;">LZeq: 79,9 dB</span><span class="t" style="left:249.00px;top:98.90px;font-size:10.5px;line-height:11.73px;color:#000;letter-spacing:-0.169px;">LZFmax: 83,1 dB</span></div></div>
<div class="win act" style="left:21px;top:410px;width:395px;height:182px"><svg class="ic" viewBox="0 0 16 16" width="16" height="16" style="left:9px;top:10px"><rect width="16" height="16" fill="#0808a8"/><path fill="#b00a0a" d="M8.0 8.0L1.5 -10.9L14.5 -10.9zM8.0 8.0L14.5 26.9L1.5 26.9zM8.0 8.0L20.3 -7.8L23.8 -4.3zM8.0 8.0L-7.8 -4.3L-4.3 -7.8zM8.0 8.0L-4.3 23.8L-7.8 20.3zM8.0 8.0L23.8 20.3L20.3 23.8zM8.0 8.0L25.7 -1.2L27.2 2.3zM8.0 8.0L-11.2 2.3L-9.7 -1.2zM8.0 8.0L-9.7 17.2L-11.2 13.7zM8.0 8.0L27.2 13.7L25.7 17.2z"/><path fill="#8a0a3c" d="M8.0 8.0L27.9 5.9L27.9 10.1zM8.0 8.0L-11.9 10.1L-11.9 5.9z"/><path d="M8 4.6L12.6 8 8 11.4 3.4 8z" fill="#0808a8"/></svg><span class="t" style="left:29.00px;top:12.87px;font-size:12.3px;line-height:13.74px;color:#000;letter-spacing:-0.312px;">Grundfrequenz</span><div class="wb " style="left:284px;top:9px"><svg width="31" height="18" viewBox="0 0 31 18" fill="#f6f6f6" stroke="#4a4a4a" stroke-width="1" stroke-linejoin="round"><rect x="10.5" y="8.5" width="10" height="4" rx="1" /></svg></div><div class="wb " style="left:318px;top:9px"><svg width="31" height="18" viewBox="0 0 31 18" fill="#f6f6f6" stroke="#4a4a4a" stroke-width="1" stroke-linejoin="round"><path fill-rule="evenodd" d="M11.2 4.5h8.6a.7.7 0 0 1 .7.7v6.6a.7.7 0 0 1-.7.7h-8.6a.7.7 0 0 1-.7-.7v-6.6a.7.7 0 0 1 .7-.7zM13.5 7.5v2h4v-2z"/></svg></div><div class="wb cl" style="left:352px;top:9px"><svg width="31" height="18" viewBox="0 0 31 18" fill="#f6f6f6" stroke="#4a4a4a" stroke-width="1" stroke-linejoin="round"><path d="M10.5 4.5h3.6l1.4 1.9 1.4-1.9h3.6l-3 4 3 4h-3.6l-1.4-1.9-1.4 1.9h-3.6l3-4z"/></svg></div><div class="cli" style="left:7px;top:30px;width:379px;height:143px"><span class="t" style="left:74.00px;top:14.08px;font-size:64px;line-height:71.49px;color:#000;letter-spacing:-3.145px;">181,5 Hz</span><div class="r" style="left:10px;top:98px;width:359px;height:40px;background:#fff;border:1px solid #1a9ff0;box-sizing:border-box"></div><span class="t" style="left:125.30px;top:107.44px;font-size:22.5px;line-height:25.13px;color:#000;letter-spacing:0.457px;">fis: 185,0 Hz</span></div></div>
<div class="win" style="left:426px;top:6px;width:831px;height:775px"><svg class="ic" viewBox="0 0 16 16" width="16" height="16" style="left:9px;top:10px"><rect width="16" height="16" fill="#0808a8"/><path fill="#b00a0a" d="M8.0 8.0L1.5 -10.9L14.5 -10.9zM8.0 8.0L14.5 26.9L1.5 26.9zM8.0 8.0L20.3 -7.8L23.8 -4.3zM8.0 8.0L-7.8 -4.3L-4.3 -7.8zM8.0 8.0L-4.3 23.8L-7.8 20.3zM8.0 8.0L23.8 20.3L20.3 23.8zM8.0 8.0L25.7 -1.2L27.2 2.3zM8.0 8.0L-11.2 2.3L-9.7 -1.2zM8.0 8.0L-9.7 17.2L-11.2 13.7zM8.0 8.0L27.2 13.7L25.7 17.2z"/><path fill="#8a0a3c" d="M8.0 8.0L27.9 5.9L27.9 10.1zM8.0 8.0L-11.9 10.1L-11.9 5.9z"/><path d="M8 4.6L12.6 8 8 11.4 3.4 8z" fill="#0808a8"/></svg><span class="t" style="left:29.00px;top:12.87px;font-size:12.3px;line-height:13.74px;color:#959595;letter-spacing:-0.295px;">Speicheroszilloskop: Gesamtaufnahme</span><div class="wb " style="left:720px;top:9px"><svg width="31" height="18" viewBox="0 0 31 18" fill="#f6f6f6" stroke="#4a4a4a" stroke-width="1" stroke-linejoin="round"><rect x="10.5" y="8.5" width="10" height="4" rx="1" /></svg></div><div class="wb " style="left:754px;top:9px"><svg width="31" height="18" viewBox="0 0 31 18" fill="#f6f6f6" stroke="#4a4a4a" stroke-width="1" stroke-linejoin="round"><path fill-rule="evenodd" d="M11.2 4.5h8.6a.7.7 0 0 1 .7.7v6.6a.7.7 0 0 1-.7.7h-8.6a.7.7 0 0 1-.7-.7v-6.6a.7.7 0 0 1 .7-.7zM13.5 7.5v2h4v-2z"/></svg></div><div class="wb " style="left:788px;top:9px"><svg width="31" height="18" viewBox="0 0 31 18" fill="#f6f6f6" stroke="#4a4a4a" stroke-width="1" stroke-linejoin="round"><path d="M10.5 4.5h3.6l1.4 1.9 1.4-1.9h3.6l-3 4 3 4h-3.6l-1.4-1.9-1.4 1.9h-3.6l3-4z"/></svg></div><div class="cli" style="left:7px;top:30px;width:815px;height:736px"><div class="r" style="left:2px;top:2px;width:813px;height:1px;background:#a0a0a0;"></div><div class="r" style="left:2px;top:2px;width:1px;height:658px;background:#a0a0a0;"></div><div class="r" style="left:814px;top:0px;width:1px;height:660px;background:#a0a0a0;"></div><div class="r" style="left:1px;top:659px;width:814px;height:1px;background:#a0a0a0;"></div><svg class="ic" style="left:0;top:0" width="815" height="660" viewBox="436 130 815 660" shape-rendering="crispEdges"><rect x="546" y="133" width="680" height="16" fill="#f0f0f0"/><rect x="619" y="141" width="17" height="1" fill="#7a7a7a"/><rect x="546" y="149" width="679" height="592" fill="#008000"/><rect x="547" y="150" width="32" height="590" fill="#008080"/><path d="M546 149.5H1225M546 209.5H1225M546 268.5H1225M546 327.5H1225M546 386.5H1225M546 445.5H1225M546 504.5H1225M546 563.5H1225M546 622.5H1225M546 681.5H1225M546 740.5H1225M546.5 149V741M613.5 149V741M681.5 149V741M749.5 149V741M817.5 149V741M885.5 149V741M952.5 149V741M1020.5 149V741M1088.5 149V741M1156.5 149V741" stroke="#00ff00" stroke-width="1" fill="none"/><path d="M1224.5 149V741" stroke="#00ff00" stroke-width="1" fill="none"/><path d="M547 170.5H1224M872.5 150V740" stroke="#e11ee1" stroke-width="1" fill="none"/><path d="M532 149.5H546M537 179.5H546M532 209.5H546M537 238.5H546M532 268.5H546M537 297.5H546M532 327.5H546M537 356.5H546M532 386.5H546M537 415.5H546M532 445.5H546M537 474.5H546M532 504.5H546M537 533.5H546M532 563.5H546M537 592.5H546M532 622.5H546M537 651.5H546M532 681.5H546M537 710.5H546M532 740.5H546M546.5 741v15M552.5 741v5M559.5 741v5M566.5 741v5M573.5 741v5M579.5 741v10M586.5 741v5M593.5 741v5M600.5 741v5M607.5 741v5M613.5 741v15M620.5 741v5M627.5 741v5M634.5 741v5M640.5 741v5M647.5 741v10M654.5 741v5M661.5 741v5M668.5 741v5M674.5 741v5M681.5 741v15M688.5 741v5M695.5 741v5M701.5 741v5M708.5 741v5M715.5 741v10M722.5 741v5M729.5 741v5M735.5 741v5M742.5 741v5M749.5 741v15M756.5 741v5M762.5 741v5M769.5 741v5M776.5 741v5M783.5 741v10M790.5 741v5M796.5 741v5M803.5 741v5M810.5 741v5M817.5 741v15M823.5 741v5M830.5 741v5M837.5 741v5M844.5 741v5M851.5 741v10M857.5 741v5M864.5 741v5M871.5 741v5M878.5 741v5M885.5 741v15M891.5 741v5M898.5 741v5M905.5 741v5M912.5 741v5M918.5 741v10M925.5 741v5M932.5 741v5M939.5 741v5M946.5 741v5M952.5 741v15M959.5 741v5M966.5 741v5M973.5 741v5M979.5 741v5M986.5 741v10M993.5 741v5M1000.5 741v5M1007.5 741v5M1013.5 741v5M1020.5 741v15M1027.5 741v5M1034.5 741v5M1040.5 741v5M1047.5 741v5M1054.5 741v10M1061.5 741v5M1068.5 741v5M1074.5 741v5M1081.5 741v5M1088.5 741v15M1095.5 741v5M1101.5 741v5M1108.5 741v5M1115.5 741v5M1122.5 741v10M1129.5 741v5M1135.5 741v5M1142.5 741v5M1149.5 741v5M1156.5 741v15M1162.5 741v5M1169.5 741v5M1176.5 741v5M1183.5 741v5M1190.5 741v10M1196.5 741v5M1203.5 741v5M1210.5 741v5M1217.5 741v5M1224.5 741v15" stroke="#000" stroke-width="1" fill="none"/><polyline points="546.5,628.7 548.4,632.3 550.8,634.0 553.2,633.0 555.6,629.2 558.0,621.5 560.4,609.5 562.8,595.0 565.2,579.4 567.7,565.0 570.1,551.8 572.9,536.1 575.6,519.3 578.0,502.5 579.7,490.4 582.1,479.6 584.5,468.5 587.4,447.9 590.5,438.3 593.4,431.6 596.0,428.9 598.2,431.6 599.6,434.5 603.7,434.9 607.3,437.8 610.9,439.5 615.0,443.6 619.3,449.1 623.0,455.1 625.4,458.3 628.5,456.3 630.9,451.5 633.8,439.5 637.4,427.5 641.0,416.7 645.8,401.0 649.4,386.6 651.8,373.4 655.4,351.8 658.3,334.9 660.7,323.4 663.8,313.3 667.4,306.5 671.0,302.5 673.4,302.0 675.9,304.1 679.0,310.9 681.9,320.5 685.0,333.7 687.9,349.3 690.3,368.6 692.7,385.4 695.1,404.6 697.5,426.3 699.9,450.3 702.0,470.0 703.5,483.2 705.4,501.3 707.6,520.5 710.0,539.7 712.4,557.8 714.8,573.4 717.4,589.0 720.3,602.2 723.2,615.5 725.6,626.3 728.0,633.0 730.4,635.4 733.1,632.3 735.5,626.3 737.9,615.5 740.3,601.0 743.2,581.8 746.1,563.8 749.2,546.9 752.1,530.1 754.9,512.7 758.0,488.7 761.2,469.5 764.0,452.6 766.4,438.2 768.9,429.8 771.7,422.1 774.9,417.8 777.3,417.0 779.0,419.0 782.1,415.4 786.9,411.0 789.3,414.2 792.9,423.8 795.3,435.8 797.7,450.2 800.1,467.1 803.0,486.3 805.4,503.1 807.8,516.3 810.2,524.3 812.9,527.6 815.0,529.1 818.1,526.7 821.3,525.2 824.2,525.5 826.6,527.6 829.4,522.4 832.1,512.7 834.3,499.5 836.2,483.9 838.1,464.6 839.8,443.0 841.5,419.0 843.4,392.5 845.1,370.9 846.6,355.0 848.5,339.6 850.9,322.7 853.3,308.3 855.7,291.5 858.1,273.4 860.1,257.8 861.8,241.0 863.4,221.8 865.4,202.5 867.0,190.5 869.0,179.7 870.9,173.2 872.3,170.8 874.3,176.1 876.2,184.5 878.6,196.5 881.0,208.5 883.4,219.3 885.8,229.4 888.2,238.6 890.1,247.0 891.8,257.8 893.5,269.8 895.4,284.3 897.1,301.1 898.5,320.3 899.7,339.6 900.8,356.0 902.3,375.7 904.0,399.7 905.9,422.6 907.8,443.0 909.2,458.0 910.8,473.3 913.9,490.1 916.4,509.3 918.8,528.6 921.2,545.4 923.6,562.2 926.0,579.1 928.4,593.5 930.8,604.3 932.9,606.7 936.1,604.3 938.5,599.5 940.9,589.9 943.3,580.3 945.7,567.1 948.1,556.2 950.5,549.0 954.1,544.2 957.7,533.4 961.3,520.2 964.4,506.9 967.3,493.7 969.7,484.1 972.1,478.8 976.5,474.5 979.3,478.1 983.0,484.8 986.1,486.5 989.4,489.4 992.6,486.5 996.2,481.7 1000.5,477.1 1002.9,479.8 1005.8,485.8 1009.4,487.7 1012.5,484.1 1014.9,475.7 1017.3,461.3 1019.7,445.6 1021.9,433.6 1023.2,423.1 1026.4,409.8 1029.7,399.0 1033.3,389.4 1036.0,373.8 1038.9,356.9 1041.7,340.1 1044.9,324.5 1047.7,310.1 1050.4,300.4 1052.8,297.3 1055.7,299.7 1058.6,306.4 1061.0,313.7 1063.4,319.7 1065.8,331.7 1068.9,343.7 1072.0,359.3 1074.4,372.6 1076.8,385.8 1079.0,402.6 1080.9,421.9 1082.9,443.5 1084.5,465.1 1086.5,486.8 1088.7,509.3 1091.2,526.2 1093.6,539.4 1096.0,552.6 1098.4,565.9 1100.8,576.7 1103.9,591.1 1106.3,605.5 1108.7,617.5 1111.1,624.8 1113.0,626.7 1115.7,623.6 1117.4,617.5 1119.0,603.3 1121.4,591.5 1123.9,577.7 1126.9,563.9 1129.3,550.2 1131.8,536.4 1134.8,522.6 1137.3,508.9 1139.3,497.1 1141.1,483.3 1142.6,469.5 1144.6,455.7 1145.9,445.9 1147.8,432.7 1150.2,423.1 1153.1,417.1 1156.7,414.2 1161.0,413.7 1163.2,415.9 1165.1,419.0 1166.8,414.6 1169.2,414.2 1172.3,418.3 1174.7,425.5 1176.6,436.3 1178.3,448.3 1180.4,459.7 1182.4,469.5 1184.3,479.3 1185.9,489.2 1187.9,499.0 1189.3,508.9 1190.2,518.7 1191.4,525.0 1192.2,526.2 1193.8,524.2 1196.3,526.6 1199.1,528.9 1201.3,527.2 1203.6,524.2 1205.2,527.5 1207.2,533.4 1209.5,530.1 1211.9,526.6 1214.0,521.6 1215.4,515.7 1216.6,506.9 1217.4,497.1 1218.4,483.3 1219.7,469.5 1221.3,455.7 1222.9,443.9 1224.2,419.5" fill="none" stroke="#fff" stroke-width="1"/></svg><span class="t" style="left:81.20px;top:14.63px;font-size:9.8px;line-height:10.95px;color:#000;letter-spacing:-0.475px;">0,5</span><span class="t" style="left:81.20px;top:74.63px;font-size:9.8px;line-height:10.95px;color:#000;letter-spacing:-0.475px;">0,4</span><span class="t" style="left:81.20px;top:133.63px;font-size:9.8px;line-height:10.95px;color:#000;letter-spacing:-0.475px;">0,3</span><span class="t" style="left:81.20px;top:192.63px;font-size:9.8px;line-height:10.95px;color:#000;letter-spacing:-0.475px;">0,2</span><span class="t" style="left:81.20px;top:251.63px;font-size:9.8px;line-height:10.95px;color:#000;letter-spacing:-0.475px;">0,1</span><span class="t" style="left:81.20px;top:310.63px;font-size:9.8px;line-height:10.95px;color:#000;letter-spacing:-0.475px;">0,0</span><span class="t" style="left:77.80px;top:369.63px;font-size:9.8px;line-height:10.95px;color:#000;letter-spacing:-0.322px;">-0,1</span><span class="t" style="left:77.80px;top:428.63px;font-size:9.8px;line-height:10.95px;color:#000;letter-spacing:-0.322px;">-0,2</span><span class="t" style="left:77.80px;top:487.63px;font-size:9.8px;line-height:10.95px;color:#000;letter-spacing:-0.322px;">-0,3</span><span class="t" style="left:77.80px;top:546.63px;font-size:9.8px;line-height:10.95px;color:#000;letter-spacing:-0.322px;">-0,4</span><span class="t" style="left:77.80px;top:605.63px;font-size:9.8px;line-height:10.95px;color:#000;letter-spacing:-0.322px;">-0,5</span><span class="t" style="left:100.50px;top:627.53px;font-size:9.8px;line-height:10.95px;color:#000;letter-spacing:-0.450px;">3187</span><span class="t" style="left:167.50px;top:627.53px;font-size:9.8px;line-height:10.95px;color:#000;letter-spacing:-0.450px;">3188</span><span class="t" style="left:235.50px;top:627.53px;font-size:9.8px;line-height:10.95px;color:#000;letter-spacing:-0.450px;">3189</span><span class="t" style="left:303.50px;top:627.53px;font-size:9.8px;line-height:10.95px;color:#000;letter-spacing:-0.450px;">3190</span><span class="t" style="left:371.50px;top:627.53px;font-size:9.8px;line-height:10.95px;color:#000;letter-spacing:-0.450px;">3191</span><span class="t" style="left:439.50px;top:627.53px;font-size:9.8px;line-height:10.95px;color:#000;letter-spacing:-0.450px;">3192</span><span class="t" style="left:506.50px;top:627.53px;font-size:9.8px;line-height:10.95px;color:#000;letter-spacing:-0.450px;">3193</span><span class="t" style="left:574.50px;top:627.53px;font-size:9.8px;line-height:10.95px;color:#000;letter-spacing:-0.450px;">3194</span><span class="t" style="left:642.50px;top:627.53px;font-size:9.8px;line-height:10.95px;color:#000;letter-spacing:-0.450px;">3195</span><span class="t" style="left:710.50px;top:627.53px;font-size:9.8px;line-height:10.95px;color:#000;letter-spacing:-0.450px;">3196</span><span class="t" style="left:778.50px;top:627.53px;font-size:9.8px;line-height:10.95px;color:#000;letter-spacing:-0.450px;">3197</span><span class="t" style="left:6.40px;top:316.53px;font-size:9.8px;line-height:10.95px;color:#000;letter-spacing:0.004px;">p(t) in Pa</span><span class="t" style="left:423.50px;top:641.73px;font-size:9.8px;line-height:10.95px;color:#000;letter-spacing:0.173px;">Zeit t in ms</span><div class="r" style="left:4px;top:669px;width:104px;height:43px;background:transparent;border:1px solid #dcdcdc;box-sizing:border-box"></div><div class="r" style="left:10.300000000000011px;top:666px;width:60.2px;height:8px;background:#fff;"></div><span class="t" style="left:12.30px;top:664.73px;font-size:9.8px;line-height:10.95px;color:#000;letter-spacing:0.144px;">Druckeinheit</span><div class="cb" style="left:16px;top:683px;width:80px;height:20px"></div><span class="t" style="left:20.00px;top:688.33px;font-size:9.8px;line-height:10.95px;color:#000;letter-spacing:-0.389px;">0,1 Pa</span><svg class="ic" style="left:82px;top:691px" width="10" height="6" viewBox="0 0 10 6"><path d="M1 .8l4 4 4-4" fill="none" stroke="#333" stroke-width="1"/></svg><div class="r" style="left:707px;top:669px;width:104px;height:43px;background:transparent;border:1px solid #dcdcdc;box-sizing:border-box"></div><div class="r" style="left:712.5px;top:666px;width:49.9px;height:8px;background:#fff;"></div><span class="t" style="left:714.50px;top:664.73px;font-size:9.8px;line-height:10.95px;color:#000;letter-spacing:0.062px;">Zeiteinheit</span><div class="cb" style="left:719px;top:683px;width:80px;height:20px"></div><span class="t" style="left:723.00px;top:688.33px;font-size:9.8px;line-height:10.95px;color:#000;letter-spacing:-0.309px;">1 ms</span><svg class="ic" style="left:785px;top:691px" width="10" height="6" viewBox="0 0 10 6"><path d="M1 .8l4 4 4-4" fill="none" stroke="#333" stroke-width="1"/></svg><div class="pb" style="left:303px;top:667px;width:102px;height:22px"></div><span class="t" style="left:329.00px;top:673.03px;font-size:9.8px;line-height:10.95px;color:#000;letter-spacing:-0.009px;">Hilfe: Zoom</span><div class="pb" style="left:409px;top:667px;width:102px;height:22px"></div><span class="t" style="left:416.50px;top:673.03px;font-size:9.8px;line-height:10.95px;color:#000;letter-spacing:-0.070px;">Fadenkreuz löschen</span><div class="pb" style="left:303px;top:692px;width:102px;height:22px"></div><span class="t" style="left:332.50px;top:698.03px;font-size:9.8px;line-height:10.95px;color:#000;letter-spacing:-0.005px;">Schaubild</span><div class="pb" style="left:409px;top:692px;width:102px;height:22px"></div><span class="t" style="left:445.50px;top:698.03px;font-size:9.8px;line-height:10.95px;color:#000;letter-spacing:-0.294px;">Tabelle</span><div class="r" style="left:0px;top:716px;width:815px;height:1px;background:#a0a0a0;"></div><div class="r" style="left:0px;top:717px;width:815px;height:19px;background:#f0f0f0;"></div><div class="r" style="left:119px;top:719px;width:1px;height:16px;background:#d2d2d2;"></div><div class="r" style="left:319px;top:719px;width:1px;height:16px;background:#d2d2d2;"></div><div class="r" style="left:519px;top:719px;width:1px;height:16px;background:#d2d2d2;"></div><span class="t" style="left:33.50px;top:722.53px;font-size:9.8px;line-height:10.95px;color:#000;letter-spacing:-0.161px;">Fadenkreuz:</span><span class="t" style="left:189.50px;top:722.53px;font-size:9.8px;line-height:10.95px;color:#000;letter-spacing:-0.106px;">t= 3191,82 ms</span><span class="t" style="left:390.20px;top:722.53px;font-size:9.8px;line-height:10.95px;color:#000;letter-spacing:-0.099px;">p(t)= 0,466 Pa</span><svg class="ic" style="left:804px;top:725px" width="10" height="10" viewBox="0 0 10 10" fill="#b8b8b8" shape-rendering="crispEdges"><rect x="7" y="1" width="2" height="2"/><rect x="4" y="4" width="2" height="2"/><rect x="7" y="4" width="2" height="2"/><rect x="1" y="7" width="2" height="2"/><rect x="4" y="7" width="2" height="2"/><rect x="7" y="7" width="2" height="2"/></svg></div></div>
</div>
<div class="r" style="left:0px;top:91px;width:1279px;height:1px;background:#a0a0a0;"></div>
<div class="r" style="left:1px;top:92px;width:1278px;height:1px;background:#696969;"></div>
<div class="r" style="left:0px;top:91px;width:1px;height:783px;background:#a0a0a0;"></div>
<div class="r" style="left:1px;top:92px;width:1px;height:782px;background:#696969;"></div>
<div class="r" style="left:1261px;top:93px;width:17px;height:781px;background:#f0f0f0;"></div>
<div class="r" style="left:1269px;top:110px;width:2px;height:697px;background:#8a8a8a;border-radius:1px"></div>
<div class="r" style="left:0px;top:874px;width:1280px;height:18px;background:#f0f0f0;"></div>
<div class="r" style="left:430px;top:882px;width:730px;height:2px;background:#8a8a8a;"></div>
<div class="r" style="left:0px;top:892px;width:1280px;height:1px;background:#ffffff;"></div>
<div class="r" style="left:0px;top:893px;width:1280px;height:19px;background:#f0f0f0;"></div>
<div class="r" style="left:95px;top:895px;width:1px;height:15px;background:#d7d7d7;"></div>
<span class="t" style="left:3.00px;top:898.33px;font-size:9.8px;line-height:10.95px;color:#000;letter-spacing:-0.183px;">Bereit</span>
<div class="r" style="left:0px;top:912px;width:1280px;height:1px;background:#cdd3d8;"></div>
<div class="r" style="left:0px;top:913px;width:1280px;height:2px;background:linear-gradient(90deg,#d3e1ee 0,#d6e4ec 30%,#dcebd0 50%,#dcebd0 80%,#e2e8e4 100%);"></div>
</body></html>
